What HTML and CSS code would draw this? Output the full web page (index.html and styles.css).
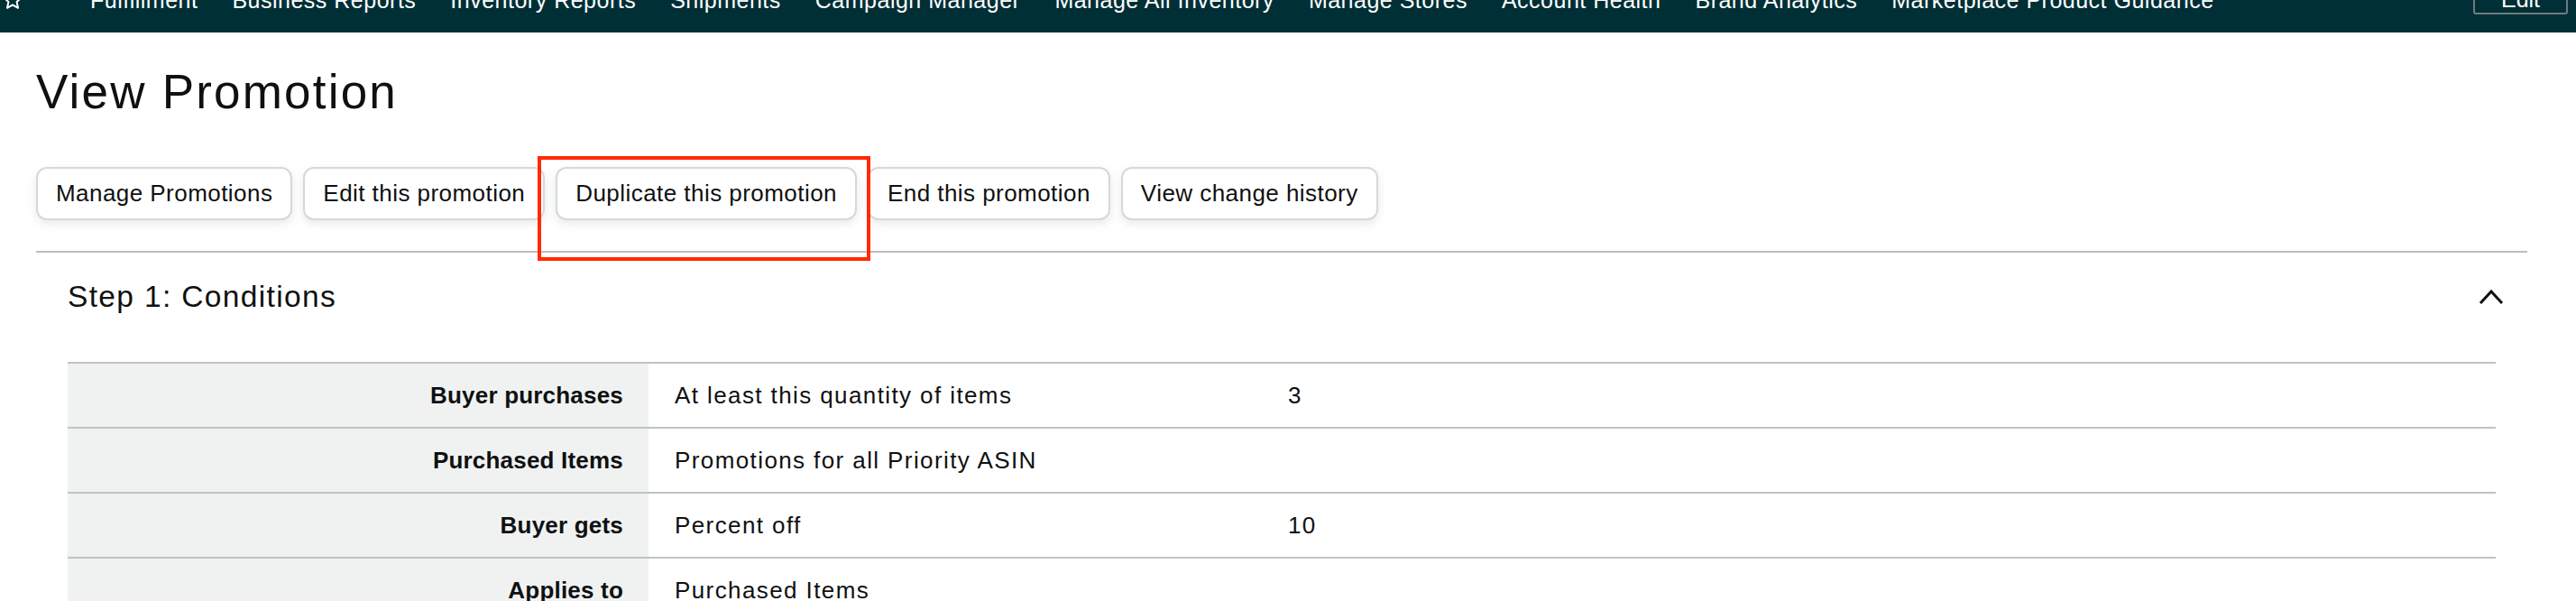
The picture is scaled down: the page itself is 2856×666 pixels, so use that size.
FILE: index.html
```html
<!DOCTYPE html>
<html lang="en">
<head>
<meta charset="utf-8">
<title>View Promotion</title>
<link rel="stylesheet" href="styles.css">
</head>
<body>
<header class="topnav">
  <div class="navrow">
    <span class="star">
      <svg width="24" height="24" viewBox="0 0 24 24"><path d="M12 2.5l2.9 6.2 6.7.8-5 4.6 1.4 6.7L12 17.4l-6 3.4 1.4-6.7-5-4.6 6.7-.8z" fill="none" stroke="#ffffff" stroke-width="2" stroke-linejoin="round"/></svg>
    </span>
    <nav class="navlinks">
      <a class="navlink">Fulfillment</a>
      <a class="navlink">Business Reports</a>
      <a class="navlink">Inventory Reports</a>
      <a class="navlink">Shipments</a>
      <a class="navlink">Campaign Manager</a>
      <a class="navlink">Manage All Inventory</a>
      <a class="navlink">Manage Stores</a>
      <a class="navlink">Account Health</a>
      <a class="navlink">Brand Analytics</a>
      <a class="navlink">Marketplace Product Guidance</a>
    </nav>
    <button class="navedit">Edit</button>
  </div>
</header>

<main class="page">
  <h1 class="title">View Promotion</h1>

  <div class="actions">
    <button class="btn">Manage Promotions</button>
    <button class="btn">Edit this promotion</button>
    <span class="highlight"><button class="btn">Duplicate this promotion</button></span>
    <button class="btn">End this promotion</button>
    <button class="btn">View change history</button>
  </div>

  <hr class="divider">

  <section class="step">
    <div class="step-head">
      <h2 class="step-title">Step 1: Conditions</h2>
      <svg class="chevron" width="28" height="18" viewBox="0 0 28 18"><polyline points="2,16 14,3 26,16" fill="none" stroke="#0f1111" stroke-width="3"/></svg>
    </div>

    <div class="kv">
      <div class="kv-row">
        <div class="kv-label">Buyer purchases</div>
        <div class="kv-value">At least this quantity of items</div>
        <div class="kv-extra">3</div>
      </div>
      <div class="kv-row">
        <div class="kv-label">Purchased Items</div>
        <div class="kv-value">Promotions for all Priority ASIN</div>
        <div class="kv-extra"></div>
      </div>
      <div class="kv-row">
        <div class="kv-label">Buyer gets</div>
        <div class="kv-value">Percent off</div>
        <div class="kv-extra">10</div>
      </div>
      <div class="kv-row">
        <div class="kv-label">Applies to</div>
        <div class="kv-value">Purchased Items</div>
        <div class="kv-extra"></div>
      </div>
    </div>
  </section>
</main>
</body>
</html>
```

FILE: styles.css
```css
* { box-sizing: border-box; }

html, body {
  margin: 0;
  padding: 0;
  background: #ffffff;
  color: #0f1111;
  font-family: "Liberation Sans", Arial, sans-serif;
}

/* ---------- top bookmark bar ---------- */
.topnav {
  height: 36px;
  background: #002f36;
  overflow: hidden;
}

.navrow {
  display: flex;
  align-items: center;
  height: 36px;
  margin-top: -18px;
  padding-left: 2px;
  padding-right: 9px;
}

.star {
  display: flex;
  width: 24px;
  height: 24px;
}

.navlinks {
  display: flex;
  gap: 38px;
  margin-left: 74px;
  flex: 1;
}

.navlink {
  color: #ffffff;
  font-size: 25px;
  line-height: 26px;
  letter-spacing: 0.5px;
  white-space: nowrap;
}

.navedit {
  align-self: flex-start;
  width: 105px;
  height: 34px;
  background: transparent;
  border: 2px solid #6f7c7d;
  border-radius: 3px;
  color: #ffffff;
  font-family: inherit;
  font-size: 25px;
  padding: 0;
}

/* ---------- page ---------- */
.page {
  padding-left: 40px;
  width: 2802px;
}

.title {
  margin: 36px 0 0 0;
  font-size: 53px;
  line-height: 60px;
  letter-spacing: 2.2px;
  font-weight: 400;
}

.actions {
  display: flex;
  gap: 12px;
  margin-top: 53px;
}

.btn {
  height: 59px;
  padding: 0 20px;
  background: #ffffff;
  border: 2px solid #d5d9d9;
  border-radius: 12px;
  box-shadow: 0 4px 10px rgba(213, 217, 217, 0.55);
  color: #0f1111;
  font-family: inherit;
  font-size: 26px;
  letter-spacing: 0.45px;
  line-height: 55px;
  white-space: nowrap;
}

.highlight {
  position: relative;
  display: flex;
}

.highlight::after {
  content: "";
  position: absolute;
  left: -20px;
  right: -15px;
  top: -12px;
  bottom: -45px;
  border: 4px solid #ff2a00;
  pointer-events: none;
}

.divider {
  margin: 34px 0 0 0;
  border: 0;
  height: 2px;
  background: #bbbfbf;
}

/* ---------- step section ---------- */
.step {
  padding: 0 35px;
}

.step-head {
  display: flex;
  align-items: center;
  justify-content: space-between;
  margin-top: 29px;
  height: 40px;
}

.step-title {
  margin: 0;
  font-size: 33.5px;
  line-height: 40px;
  letter-spacing: 1.35px;
  font-weight: 400;
}

.chevron {
  margin-right: -9px;
}

.kv {
  margin-top: 52px;
}

.kv-row {
  display: grid;
  grid-template-columns: 644px 680px 1fr;
  border-top: 2px solid #bfc3c3;
  height: 72px;
}

.kv-row > div {
  display: flex;
  align-items: center;
  font-size: 26px;
  line-height: 30px;
}

.kv-label {
  justify-content: flex-end;
  padding-right: 28px;
  background: #f0f2f2;
  font-weight: 700;
  letter-spacing: 0.2px;
}

.kv-value {
  padding-left: 29px;
  letter-spacing: 1.4px;
}

.kv-extra {
  padding-left: 29px;
  letter-spacing: 1.4px;
}
```
